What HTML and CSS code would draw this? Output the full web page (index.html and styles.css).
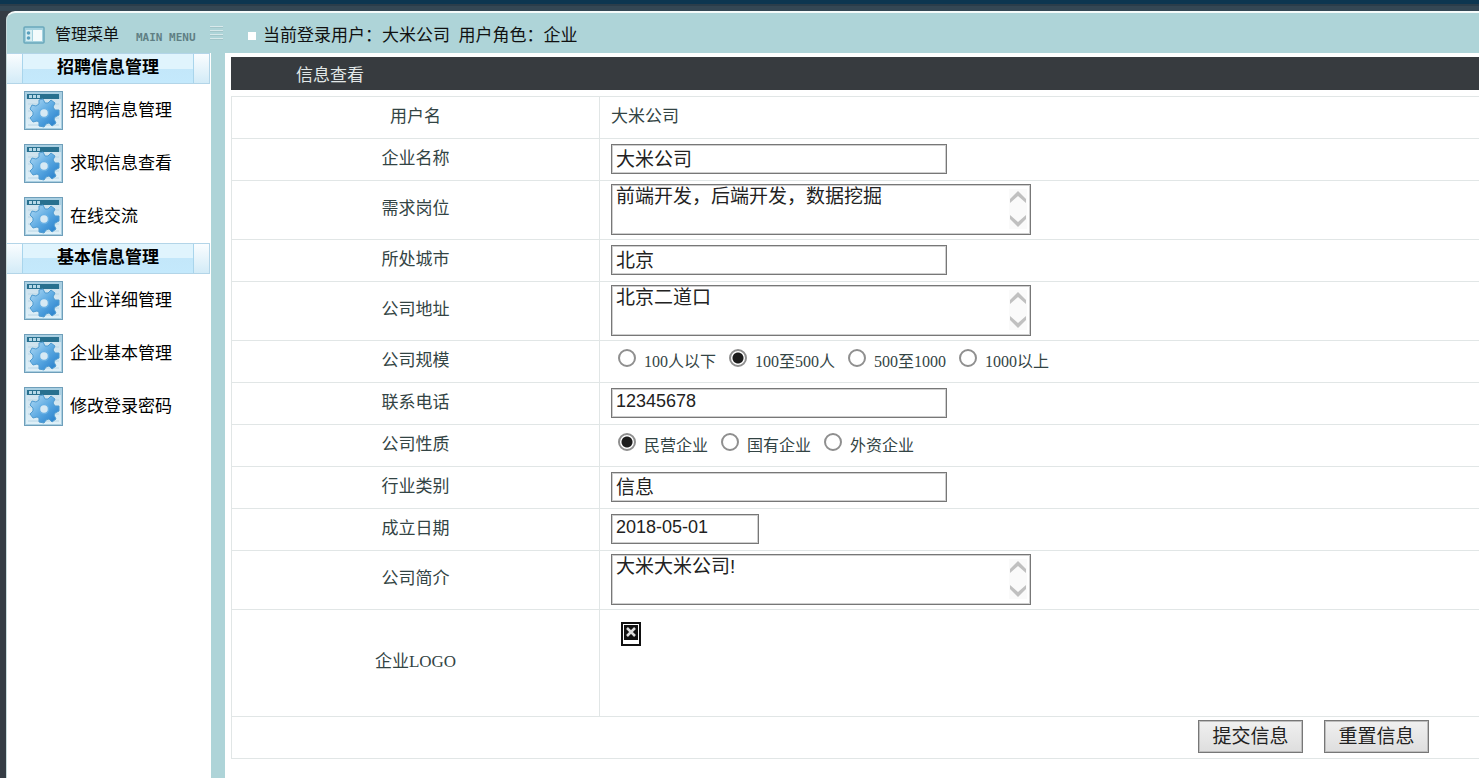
FILE: index.html
```html
<!DOCTYPE html>
<html lang="zh-CN">
<head>
<meta charset="utf-8">
<title>信息查看</title>
<link rel="stylesheet" href="styles.css">
</head>
<body>
<svg class="defs" aria-hidden="true">
  <defs>
    <linearGradient id="gearFill" x1="0" y1="0" x2="1" y2="1">
      <stop offset="0" stop-color="#b4dcf5"/><stop offset="0.5" stop-color="#5ba9e2"/><stop offset="1" stop-color="#1e78c8"/>
    </linearGradient>
    <linearGradient id="winFill" x1="0" y1="0" x2="0" y2="1">
      <stop offset="0" stop-color="#cfe3ee"/><stop offset="1" stop-color="#dff0f8"/>
    </linearGradient>
    <symbol id="gear" viewBox="0 0 39 39">
      <rect x="0.5" y="0.5" width="38" height="38" fill="#a9cfe2" stroke="#6f9fba"/>
      <rect x="2" y="8" width="35" height="29" fill="url(#winFill)"/>
      <path d="M4 13h31M4 20h31M4 27h31M4 34h31" stroke="#b8d6e6" stroke-width="1"/>
      <rect x="3" y="3" width="32" height="5" fill="#28708f"/>
      <path d="M5 4h3v3H5zM9 4h3v3H9zM13 4h3v3h-3z" fill="#b5d8e7"/>
      <g transform="translate(20 22)">
        <path d="M-5-13L-1-14L1-10L4-10L7-13L11-10L9-6L11-3L15-3L15 2L11 4L10 6L12 10L8 13L5 10L2 11L0 14L-5 13L-5 9L-7 8L-11 9L-14 5L-11 2L-11-1L-14-4L-12-8L-8-7L-5-9Z" fill="url(#gearFill)" stroke="#4f9bd0" stroke-width="1" stroke-linejoin="round"/>
        <circle r="4.5" fill="#d6e9f4" stroke="#68b0e4" stroke-width="1.5"/>
      </g>
    </symbol>
    <symbol id="arrows" viewBox="0 0 18 40">
      <path d="M1 14V10L9 2L17 10V14L9 7ZM1 26V30L9 38L17 30V26L9 33Z" fill="#c0c0c0"/>
    </symbol>
  </defs>
</svg>
<div class="topbar"></div>
<div class="shell">
  <header class="header">
    <div class="brand">
      <svg class="brand-icon" viewBox="0 0 22 18" aria-hidden="true">
        <rect x="1" y="1" width="20" height="16" rx="1" fill="#a4d2df" stroke="#6aa8bc" stroke-width="1.5"/>
        <rect x="10" y="4" width="9" height="11" fill="#f4fbfc"/>
        <rect x="3" y="4" width="6" height="11" fill="#d8eef2"/>
        <circle cx="5.5" cy="7" r="1.8" fill="#5aa0bd"/><circle cx="5.5" cy="12" r="1.8" fill="#5aa0bd"/>
      </svg>
      <span class="brand-title">管理菜单</span>
      <span class="brand-sub">MAIN MENU</span>
      <svg class="grip" viewBox="0 0 13 15" aria-hidden="true">
        <path d="M0 1.5h13M0 5.5h13M0 9.5h13M0 13.5h13" stroke="#d8e9eb"/>
        <path d="M0 2.5h13M0 6.5h13M0 10.5h13M0 14.5h13" stroke="#a2c5c9"/>
      </svg>
    </div>
    <div class="status"><span class="bullet"></span>当前登录用户：大米公司&nbsp; 用户角色：企业</div>
  </header>
  <div class="body">
    <nav class="sidebar">
      <h2 class="group"><span class="group-label">招聘信息管理</span></h2>
      <a class="item" href="#"><svg class="item-icon"><use href="#gear"/></svg>招聘信息管理</a>
      <a class="item" href="#"><svg class="item-icon"><use href="#gear"/></svg>求职信息查看</a>
      <a class="item" href="#"><svg class="item-icon"><use href="#gear"/></svg>在线交流</a>
      <h2 class="group"><span class="group-label">基本信息管理</span></h2>
      <a class="item" href="#"><svg class="item-icon"><use href="#gear"/></svg>企业详细管理</a>
      <a class="item" href="#"><svg class="item-icon"><use href="#gear"/></svg>企业基本管理</a>
      <a class="item" href="#"><svg class="item-icon"><use href="#gear"/></svg>修改登录密码</a>
    </nav>
    <main class="main">
      <h1 class="title">信息查看</h1>
      <form>
      <table class="form">
        <tr><th>用户名</th><td>大米公司</td></tr>
        <tr><th><label for="name">企业名称</label></th><td><input class="text" id="name" type="text" value="大米公司"></td></tr>
        <tr class="tall"><th><label for="jobs">需求岗位</label></th><td><div class="area"><textarea id="jobs">前端开发，后端开发，数据挖掘</textarea><svg class="arrows"><use href="#arrows"/></svg></div></td></tr>
        <tr><th><label for="city">所处城市</label></th><td><input class="text" id="city" type="text" value="北京"></td></tr>
        <tr class="tall"><th><label for="addr">公司地址</label></th><td><div class="area"><textarea id="addr">北京二道口</textarea><svg class="arrows"><use href="#arrows"/></svg></div></td></tr>
        <tr><th>公司规模</th><td><div class="radios">
          <label><input type="radio" name="size"><span>100人以下</span></label>
          <label><input type="radio" name="size" checked><span>100至500人</span></label>
          <label><input type="radio" name="size"><span>500至1000</span></label>
          <label><input type="radio" name="size"><span>1000以上</span></label>
        </div></td></tr>
        <tr><th><label for="phone">联系电话</label></th><td><input class="text number" id="phone" type="text" value="12345678"></td></tr>
        <tr><th>公司性质</th><td><div class="radios">
          <label><input type="radio" name="kind" checked><span>民营企业</span></label>
          <label><input type="radio" name="kind"><span>国有企业</span></label>
          <label><input type="radio" name="kind"><span>外资企业</span></label>
        </div></td></tr>
        <tr><th><label for="trade">行业类别</label></th><td><input class="text" id="trade" type="text" value="信息"></td></tr>
        <tr><th><label for="date">成立日期</label></th><td><input class="text number date" id="date" type="text" value="2018-05-01"></td></tr>
        <tr class="tall"><th><label for="intro">公司简介</label></th><td><div class="area"><textarea id="intro">大米大米公司!</textarea><svg class="arrows"><use href="#arrows"/></svg></div></td></tr>
        <tr class="logo-row"><th>企业LOGO</th><td class="logo-cell">
          <svg class="missing" viewBox="0 0 20 24" role="img" aria-label="企业LOGO">
            <rect x="1" y="1" width="18" height="22" fill="#fff" stroke="#111" stroke-width="2"/>
            <rect x="3" y="3" width="14" height="15" fill="#111"/>
            <path d="M6 6l8 8M14 6l-8 8" stroke="#ddd" stroke-width="2.5"/>
          </svg></td></tr>
        <tr><td class="actions" colspan="2"><div class="buttons"><button type="button">提交信息</button><button type="reset">重置信息</button></div></td></tr>
      </table>
      </form>
    </main>
  </div>
</div>
</body>
</html>
```
FILE: styles.css
```css
* { box-sizing: border-box; }
body {
  margin: 0;
  min-height: 100vh;
  display: flex;
  flex-direction: column;
  overflow-x: hidden;
  background: #353c44;
  color: #000;
  font: 17px/24px "Liberation Serif", "Noto Sans CJK SC", sans-serif;
}
.defs { position: absolute; width: 0; height: 0; }
.topbar {
  height: 11px;
  background: linear-gradient(#0d3650 0 4px, #2b3d4a 4px 6px, #344754 6px);
}
.shell {
  flex: 1;
  display: flex;
  flex-direction: column;
  margin-left: 6px;
  border-top: 2px solid #f4fafa;
  border-left: 1px solid #c8dadb;
  border-radius: 9px 0 0 0;
  background: #aed4d8;
}
.header { display: flex; align-items: center; height: 40px; padding-top: 3px; }
.brand { display: flex; align-items: center; width: 241px; flex: none; padding-left: 16px; }
.brand-icon { width: 22px; height: 18px; margin-right: 10px; }
.brand-title { width: 81px; font-size: 16px; color: #111; }
.brand-sub {
  padding-top: 6px;
  width: 74px;
  font: bold 11px/16px "DejaVu Sans Mono", monospace;
  color: #5f7f84;
}
.grip { width: 13px; height: 15px; margin-bottom: 4px; }
.status { display: flex; align-items: center; gap: 7px; padding-top: 3px; color: #111; }
.bullet { width: 8px; height: 8px; background: #fff; }
.body { flex: 1; display: flex; }
.sidebar { width: 204px; flex: none; background: #fff; }
.group {
  margin: 0 1px 0 0;
  height: 31px;
  padding: 0 15px;
  border: 1px solid #b3d5e8;
  border-left: 0;
  background: linear-gradient(#fafdff, #d3ebf7);
  font-size: 17px;
  line-height: 28px;
  text-align: center;
}
.group-label {
  display: block;
  height: 29px;
  border: solid #a9d5ec;
  border-width: 0 1px;
  background: linear-gradient(#e0f4fd 0 50%, #c3e7fa 50%, #c4e9fc);
}
.item {
  display: flex;
  align-items: center;
  gap: 7px;
  height: 53px;
  padding-left: 17px;
  color: #000;
  text-decoration: none;
}
.item-icon { width: 39px; height: 39px; }
.main {
  flex: 1;
  min-width: 0;
  margin-left: 14px;
  padding: 4px 0 20px 6px;
  background: #fff;
}
.title {
  margin: 0 0 6px;
  height: 33px;
  padding: 3px 0 0 65px;
  background: #373b3f;
  color: #e2e8e8;
  font-size: 17px;
  font-weight: normal;
  line-height: 32px;
}
.form { width: 100%; border-collapse: collapse; table-layout: fixed; color: #344; }
.form tr { height: 42px; }
.form .tall { height: 59px; }
.form .logo-row { height: 107px; }
.form th, .form td { border: 1px solid #e1e6e6; border-right: 0; padding: 0 0 2px 11px; }
.form th { width: 368px; padding: 0 0 2px; font-weight: normal; text-align: center; }
.text, textarea {
  display: block;
  border: 1px solid #777;
  outline: 1px solid #cfcfcf;
  outline-offset: -2px;
  border-radius: 0;
  background: #fff;
  color: #222;
  font: 19px/24px "Liberation Sans", "Noto Sans CJK SC", sans-serif;
}
.text { width: 336px; height: 30px; padding: 0 4px 2px; }
.number { font-size: 18px; }
.date { width: 148px; }
.area { position: relative; width: 420px; }
textarea { width: 100%; height: 51px; padding: 0 24px 0 4px; resize: none; overflow: hidden; }
.arrows { position: absolute; right: 4px; top: 5px; width: 18px; height: 40px; background: #fafafa; }
.radios { display: flex; gap: 13px; padding-left: 7px; font-size: 16px; }
.radios label { display: flex; align-items: flex-start; gap: 8px; }
.radios span { padding-top: 3px; }
.radios input {
  appearance: none;
  width: 18px;
  height: 18px;
  margin: 2px 0 0;
  border: 2px solid #8f8f8f;
  border-radius: 50%;
  background: #fff;
}
.radios input:checked { background: radial-gradient(circle, #1c1c1c 0 5px, #fff 6px); }
.form .logo-cell { vertical-align: top; padding: 12px 0 0 21px; }
.missing { display: block; width: 20px; height: 24px; }
.buttons { display: flex; justify-content: flex-end; gap: 21px; padding-right: 50px; }
.buttons button {
  width: 105px;
  height: 33px;
  padding: 0;
  border: 1px solid #777;
  outline: 1px solid #bdbdbd;
  outline-offset: -2px;
  border-radius: 0;
  background: linear-gradient(#f0f0f0, #dedede);
  color: #222;
  font: 19px/24px "Liberation Sans", "Noto Sans CJK SC", sans-serif;
}
```
